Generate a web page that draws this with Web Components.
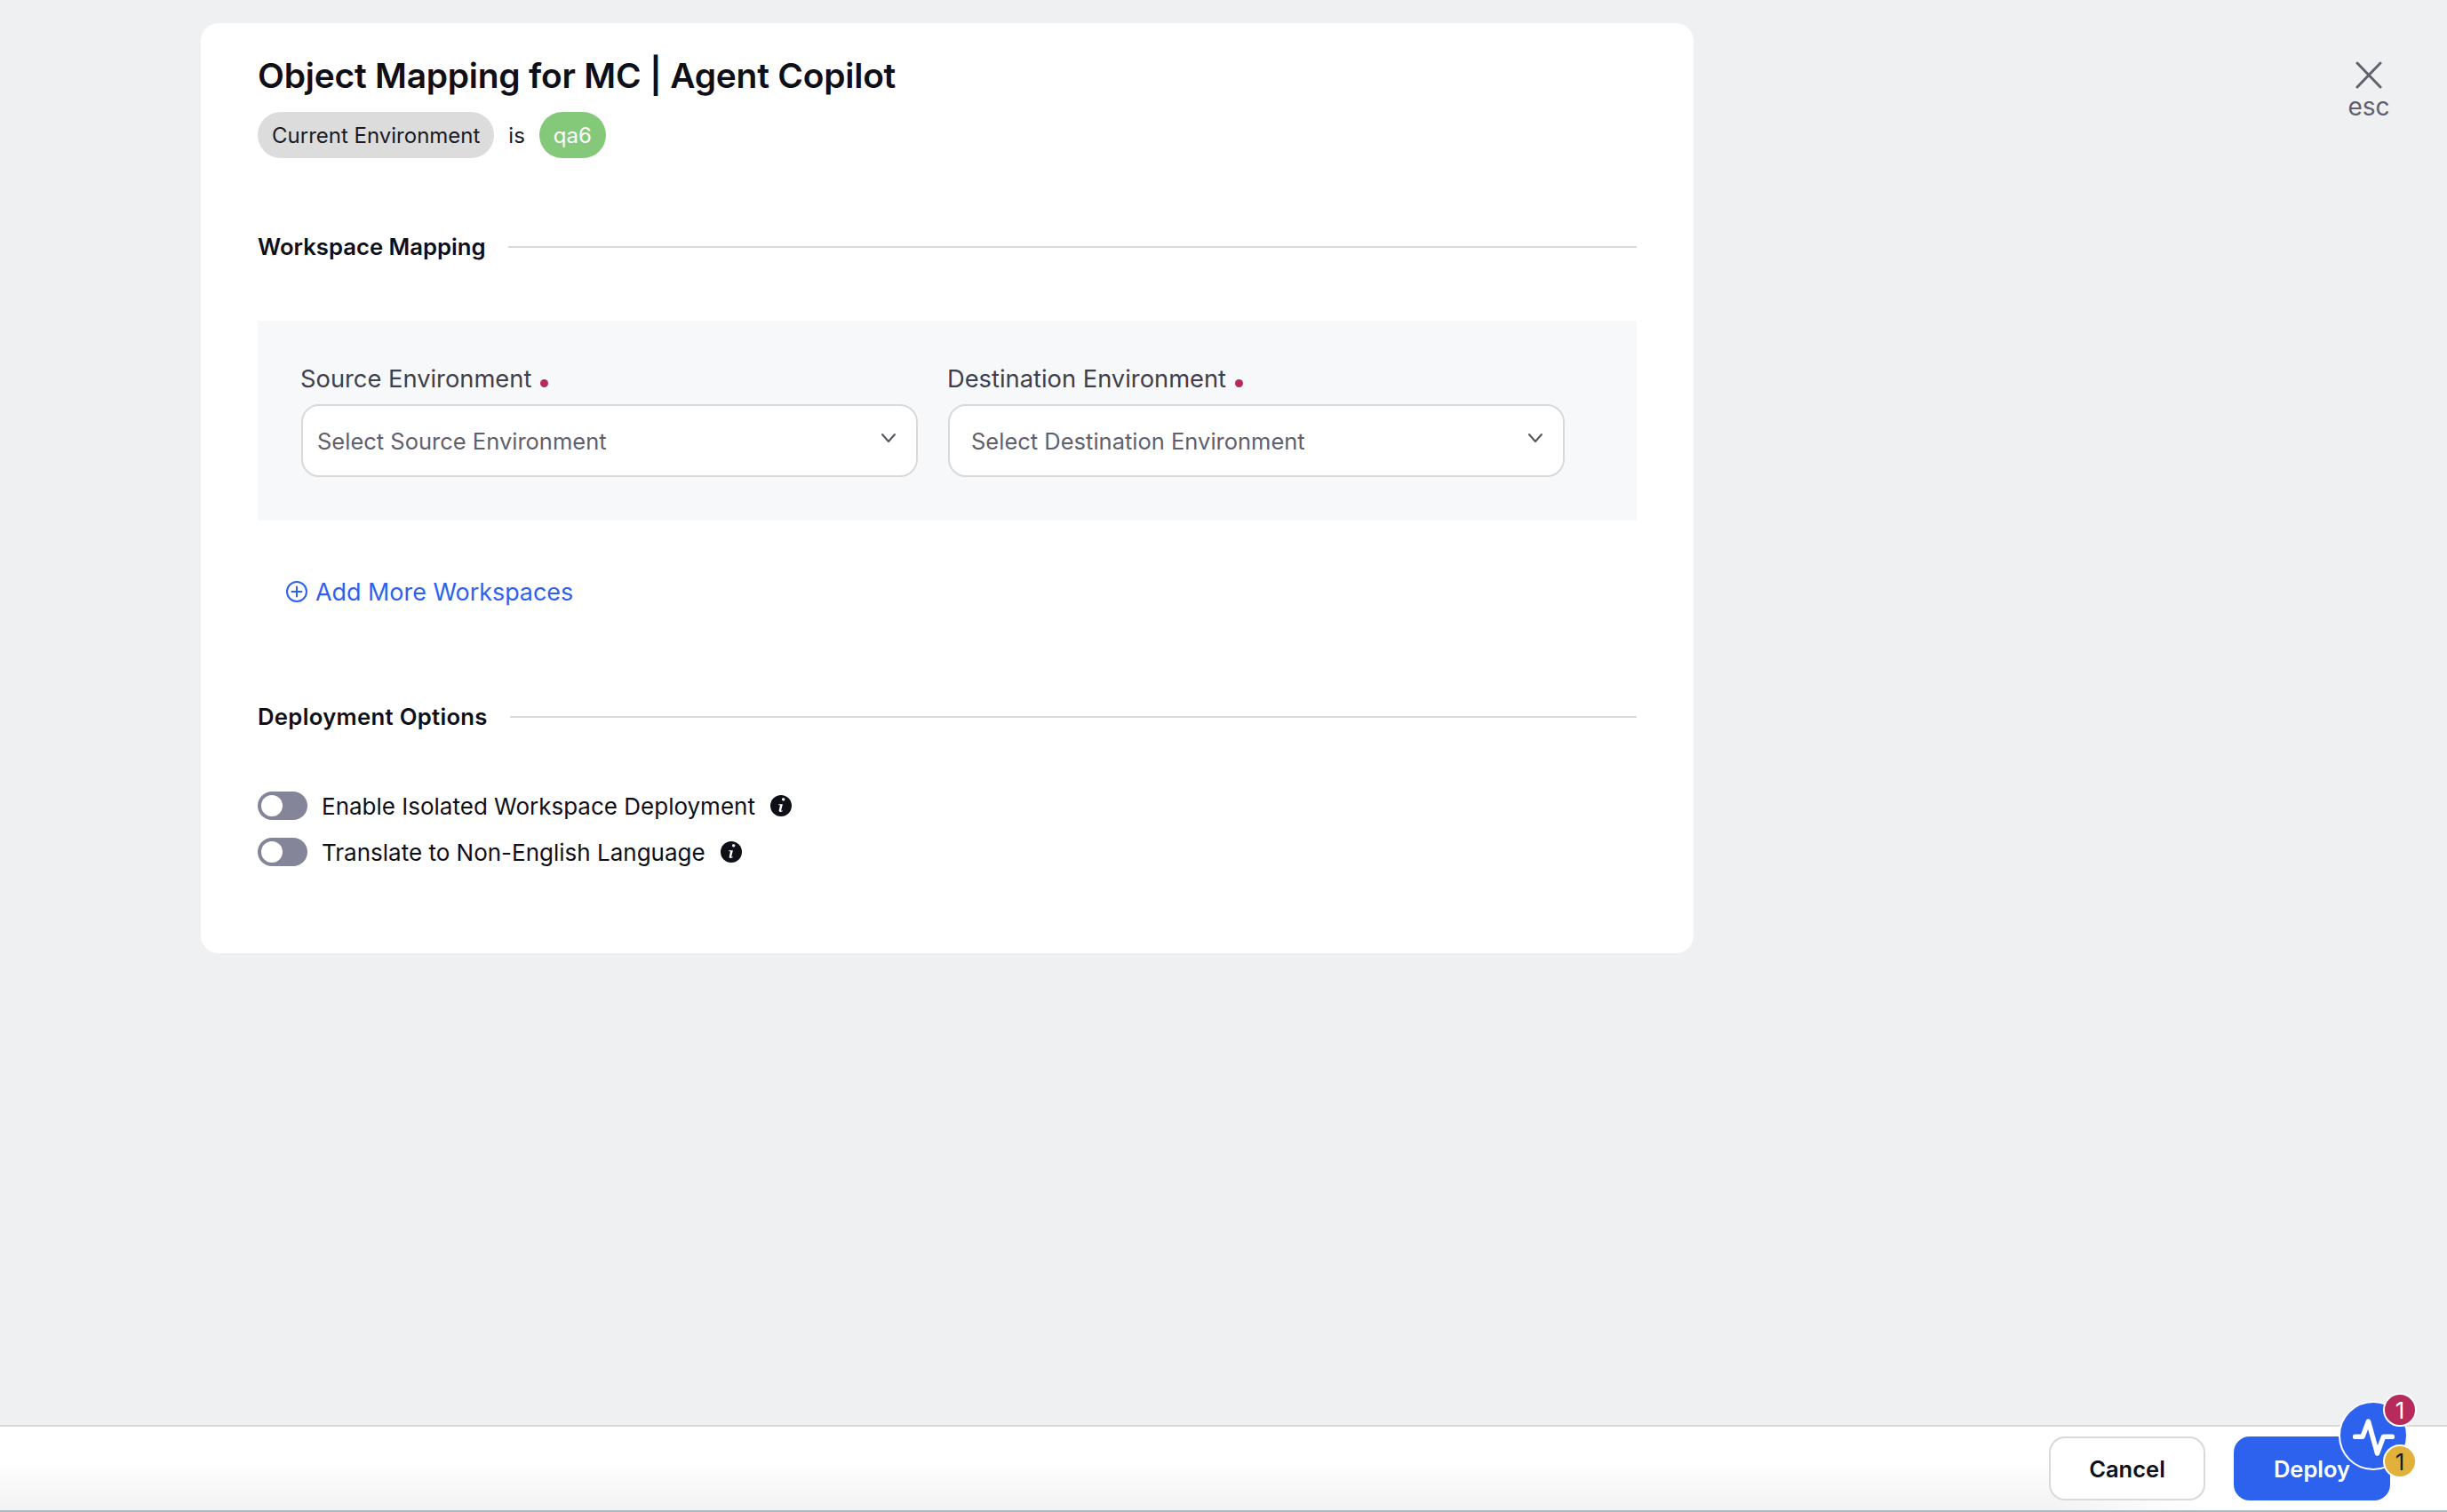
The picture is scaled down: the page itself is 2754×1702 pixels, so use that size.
<!DOCTYPE html>
<html lang="en"><head><meta charset="utf-8"><title>Object Mapping</title>
<style>
html,body{margin:0;padding:0;height:100%}
body{font-family:Inter,"Liberation Sans",sans-serif;background:#eff0f2;color:#0f0f17;overflow:hidden}
</style></head>
<body>
<template id="t-page"><style>
:host{display:flex;flex-direction:column;height:1702px;position:relative}
.main{flex:1;display:flex;align-items:flex-start;padding:26px 0 0 226px;min-height:0}
</style>
<div class="main"><slot></slot></div><slot name="close"></slot><slot name="footer"></slot></template>

<template id="t-card"><style>
:host{display:block;width:1680px;height:1047px;box-sizing:border-box;background:#fff;border-radius:20px;padding:34px 64px 0}
h1{margin:0;font:600 38.9px/50px Inter,sans-serif;letter-spacing:-.22px;color:#0f0f17}
.env{display:flex;align-items:center;margin-top:16px;font-size:24px;height:52px}
.is{margin:0 16px;color:#1a1a25}
</style>
<h1><slot name="title"></slot></h1>
<div class="env"><x-chip><slot name="env"></slot></x-chip><span class="is">is</span><x-chip tone="green"><slot name="val"></slot></x-chip></div>
<slot></slot></template>

<template id="t-chip"><style>
:host{display:inline-flex;align-items:center;height:52px;padding:0 16px;border-radius:26px;background:#dcdcdc;color:#1a1a25;font-size:24px;white-space:nowrap}
:host([tone=green]){background:#84c97a;color:#fff}
</style><slot></slot></template>

<template id="t-section"><style>
:host{display:flex;align-items:center;gap:25px;font:600 25.7px/32px Inter,sans-serif;color:#0f0f17;white-space:nowrap}
i{flex:1;height:2px;background:#d9d9d9}
</style><slot></slot><i></i></template>

<template id="t-panel"><style>
:host{display:flex;background:#f7f8fa;padding:48px 49px;gap:34px;height:225px;box-sizing:border-box;margin-top:67px}
</style><slot></slot></template>

<template id="t-field"><style>
:host{display:block;width:694px;font-family:Inter,sans-serif}
.l{display:flex;align-items:center;font-size:27.3px;line-height:36px;color:#3e3e4d;height:36px;margin:0 0 10px -1px;white-space:nowrap}
.l i{width:9px;height:9px;border-radius:50%;background:#b72a5c;margin:9px 0 0 10px}
.s{display:flex;justify-content:space-between;align-items:center;height:82px;box-sizing:border-box;border:2px solid #d9d9d9;border-radius:20px;background:#fff;padding:0 22px 0 var(--pl,16px);font-size:25.5px;color:#5f5f6e}
svg{display:block;margin-top:-6px}
</style>
<div class="l"><slot name="label"></slot><i></i></div>
<div class="s"><span><slot name="ph"></slot></span>
<svg width="18" height="12" viewBox="0 0 18 12" fill="none" stroke="#55555f" stroke-width="2" stroke-linecap="round" stroke-linejoin="round"><path d="M2 2l7 8 7-8"/></svg></div></template>

<template id="t-add"><style>
:host{display:flex;align-items:center;gap:9px;margin:62px 0 0 32px;height:36px;font-size:26.9px;color:#2e62ee;white-space:nowrap}
svg{display:block}
</style>
<svg width="24" height="24" viewBox="0 0 24 24" fill="none" stroke="#2e62ee" stroke-width="2" stroke-linecap="round"><circle cx="12" cy="12" r="11"/><path d="M12 6.5v11M6.5 12h11"/></svg>
<slot></slot></template>

<template id="t-toggle"><style>
:host{display:flex;align-items:center;height:32px;font-size:26px;color:#0f0f17;white-space:nowrap}
.t{width:56px;height:32px;border-radius:16px;background:#85859a;position:relative;flex:none;margin-right:16px}
.t b{position:absolute;left:4px;top:4px;width:24px;height:24px;border-radius:50%;background:#fff}
svg{display:block;margin-left:17px}
</style>
<span class="t"><b></b></span><slot></slot>
<svg width="24" height="24" viewBox="0 0 24 24"><circle cx="12" cy="12" r="12" fill="#0f0f17"/><path d="M13 4.8a1.7 1.7 0 1 1 0 .1zM9.3 10.2h4.6l-1.7 7c-.1.5.3.7 1.6.1l-.2.9c-2 1.1-4.3.9-3.9-.9l1.3-6h-1.9z" fill="#fff"/></svg></template>

<template id="t-close"><style>
:host{display:flex;flex-direction:column;align-items:center;font-size:28px;line-height:30px;color:#5f5f6e}
svg{display:block;margin-bottom:5px}
</style>
<svg width="32" height="32" viewBox="0 0 32 32" stroke="#62626e" stroke-width="3" stroke-linecap="round"><path d="M3 3l26 27M29 3L3 30"/></svg><slot></slot></template>

<template id="t-footer"><style>
:host{display:flex;justify-content:flex-end;align-items:center;gap:32px;height:98px;box-sizing:border-box;padding:0 64px 0 0;border-top:2px solid #d9d9d9;border-bottom:2px solid #a9bcc4;background:linear-gradient(to right,transparent 84%,#fff 90%),linear-gradient(to bottom,#fff 40%,#f2f2f2 100%)}
</style><slot></slot></template>

<template id="t-btn"><style>
:host{display:flex;align-items:center;justify-content:center;width:176px;height:72px;box-sizing:border-box;border:2px solid #d9d9d9;border-radius:18px;background:#fff;font:600 25.5px Inter,sans-serif;color:#0f0f17}
:host([primary]){background:#2d62ee;border-color:#2d62ee;color:#fff}
</style><slot></slot></template>

<template id="t-fab"><style>
:host{position:absolute;left:2632px;top:1577px;width:78px;height:78px;box-sizing:border-box;border-radius:50%;background:#2d62ee;border:2px solid #fff;display:flex;align-items:center;justify-content:center}
svg{margin-top:3px}
.b{position:absolute;width:34px;height:34px;border:2px solid #fff;border-radius:50%;left:48px;display:flex;align-items:center;justify-content:center;font:400 26px Inter,sans-serif}
.r{top:-11px;background:#b72a5c;color:#fff}.y{top:47px;background:#e2b13c;color:#1a1a25}
</style>
<svg width="47" height="42" viewBox="0 0 47 42" fill="none" stroke="#fff" stroke-width="5.5" stroke-linecap="round" stroke-linejoin="round"><path d="M2.5 20.3H11L17.5 3l10 36 7-18.7h10"/></svg>
<span class="b r">1</span><span class="b y">1</span></template>

<script>
const def=(n,id)=>customElements.define(n,class extends HTMLElement{constructor(){super();this.attachShadow({mode:'open'}).append(document.getElementById(id).content.cloneNode(true))}});
[['x-page','t-page'],['x-card','t-card'],['x-chip','t-chip'],['x-section','t-section'],['x-panel','t-panel'],['x-field','t-field'],['x-add','t-add'],['x-toggle','t-toggle'],['x-close','t-close'],['x-footer','t-footer'],['x-btn','t-btn'],['x-fab','t-fab']].forEach(a=>def(...a));
</script>

<x-page>
<x-card>
<span slot="title">Object Mapping for MC | Agent Copilot</span>
<span slot="env">Current Environment</span><span slot="val">qa6</span>
<x-section style="margin-top:84px">Workspace Mapping</x-section>
<x-panel>
<x-field><span slot="label">Source Environment</span><span slot="ph">Select Source Environment</span></x-field>
<x-field style="--pl:24px"><span slot="label">Destination Environment</span><span slot="ph">Select Destination Environment</span></x-field>
</x-panel>
<x-add>Add More Workspaces</x-add>
<x-section style="margin-top:107px;letter-spacing:.3px">Deployment Options</x-section>
<x-toggle style="margin-top:68px">Enable Isolated Workspace Deployment</x-toggle>
<x-toggle style="margin-top:20px">Translate to Non-English Language</x-toggle>
</x-card>
<x-close slot="close" style="position:absolute;left:2638px;top:68px;width:56px">esc</x-close>
<x-footer slot="footer"><x-btn>Cancel</x-btn><x-btn primary>Deploy</x-btn></x-footer>
<x-fab slot="footer"></x-fab>
</x-page>
</body></html>
